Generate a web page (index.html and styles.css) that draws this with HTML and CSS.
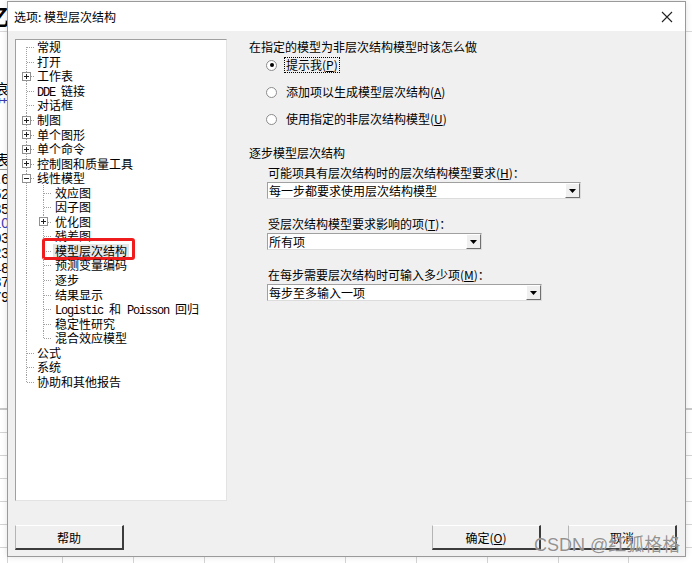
FILE: index.html
```html
<!DOCTYPE html>
<html lang="zh-CN">
<head>
<meta charset="utf-8">
<title>选项: 模型层次结构</title>
<link rel="stylesheet" href="styles.css">
</head>
<body>
<div class="sheet">
  <div class="sheet-top">
    <div class="strip">
      <div class="s-row s-big">亿</div>
      <div class="s-gap1"></div>
      <div class="s-row">哀</div>
      <div class="s-row s-blue">艹</div>
      <div class="s-gap2"></div>
      <div class="s-row s-head">表</div>
      <div class="s-row">1.6</div>
      <div class="s-row">0.52</div>
      <div class="s-row">0.35</div>
      <div class="s-row s-blue">0.10</div>
      <div class="s-row">0.03</div>
      <div class="s-row">0.23</div>
      <div class="s-row">0.48</div>
      <div class="s-row">0.37</div>
      <div class="s-row">0.79</div>
    </div>
  </div>
  <div class="sheet-grid"></div>
</div>

<div class="dialog">
  <div class="titlebar">
    <span class="title">选项: 模型层次结构</span>
    <svg class="close" width="12" height="12" viewBox="0 0 12 12"><path d="M1 1 L11 11 M11 1 L1 11" stroke="#222" stroke-width="1.1" fill="none"/></svg>
  </div>
  <div class="content">
    <div class="main">
      <div class="tree">
        <div class="row"><span class="c c1 first"></span><span class="t">常规</span></div>
        <div class="row"><span class="c c1"></span><span class="t">打开</span></div>
        <div class="row"><span class="c c1"><i class="box plus"></i></span><span class="t">工作表</span></div>
        <div class="row"><span class="c c1"></span><span class="t"><span class="lat">DDE </span>链接</span></div>
        <div class="row"><span class="c c1"></span><span class="t">对话框</span></div>
        <div class="row"><span class="c c1"><i class="box plus"></i></span><span class="t">制图</span></div>
        <div class="row"><span class="c c1"><i class="box plus"></i></span><span class="t">单个图形</span></div>
        <div class="row"><span class="c c1"><i class="box plus"></i></span><span class="t">单个命令</span></div>
        <div class="row"><span class="c c1"><i class="box plus"></i></span><span class="t">控制图和质量工具</span></div>
        <div class="row"><span class="c c1"><i class="box"></i></span><span class="t">线性模型</span></div>
        <div class="row"><span class="c c1 pipe"></span><span class="c c2"></span><span class="t">效应图</span></div>
        <div class="row"><span class="c c1 pipe"></span><span class="c c2"></span><span class="t">因子图</span></div>
        <div class="row"><span class="c c1 pipe"></span><span class="c c2"><i class="box plus"></i></span><span class="t">优化图</span></div>
        <div class="row"><span class="c c1 pipe"></span><span class="c c2"></span><span class="t">残差图</span></div>
        <div class="row selected"><span class="c c1 pipe"></span><span class="c c2"></span><span class="t">模型层次结构</span><span class="mark"></span></div>
        <div class="row"><span class="c c1 pipe"></span><span class="c c2"></span><span class="t">预测变量编码</span></div>
        <div class="row"><span class="c c1 pipe"></span><span class="c c2"></span><span class="t">逐步</span></div>
        <div class="row"><span class="c c1 pipe"></span><span class="c c2"></span><span class="t">结果显示</span></div>
        <div class="row"><span class="c c1 pipe"></span><span class="c c2"></span><span class="t"><span class="lat">Logistic </span>和<span class="lat"> Poisson </span>回归</span></div>
        <div class="row"><span class="c c1 pipe"></span><span class="c c2"></span><span class="t">稳定性研究</span></div>
        <div class="row"><span class="c c1 pipe"></span><span class="c c2 last"></span><span class="t">混合效应模型</span></div>
        <div class="row"><span class="c c1"></span><span class="t">公式</span></div>
        <div class="row"><span class="c c1"></span><span class="t">系统</span></div>
        <div class="row"><span class="c c1 last"></span><span class="t">协助和其他报告</span></div>
      </div>

      <div class="panel">
        <div class="heading">在指定的模型为非层次结构模型时该怎么做</div>
        <div class="radios">
          <div class="radio-row"><span class="radio checked"></span><span class="rlabel focus">提示我(<u>P</u>)</span></div>
          <div class="radio-row"><span class="radio"></span><span class="rlabel">添加项以生成模型层次结构(<u>A</u>)</span></div>
          <div class="radio-row"><span class="radio"></span><span class="rlabel">使用指定的非层次结构模型(<u>U</u>)</span></div>
        </div>

        <div class="heading h2">逐步模型层次结构</div>
        <div class="field f1">
          <div class="flabel">可能项具有层次结构时的层次结构模型要求(<u>H</u>)：</div>
          <div class="combo w1"><span class="val">每一步都要求使用层次结构模型</span><span class="arrow"><svg width="7" height="4" viewBox="0 0 7 4"><path d="M0 0 H7 L3.5 4 Z" fill="#000"/></svg></span></div>
        </div>
        <div class="field">
          <div class="flabel">受层次结构模型要求影响的项(<u>T</u>)：</div>
          <div class="combo w2"><span class="val">所有项</span><span class="arrow"><svg width="7" height="4" viewBox="0 0 7 4"><path d="M0 0 H7 L3.5 4 Z" fill="#000"/></svg></span></div>
        </div>
        <div class="field">
          <div class="flabel">在每步需要层次结构时可输入多少项(<u>M</u>)：</div>
          <div class="combo w3"><span class="val">每步至多输入一项</span><span class="arrow"><svg width="7" height="4" viewBox="0 0 7 4"><path d="M0 0 H7 L3.5 4 Z" fill="#000"/></svg></span></div>
        </div>
      </div>
    </div>

    <div class="buttons">
      <button class="btn">帮助</button>
      <span class="spacer"></span>
      <button class="btn">确定(<u>O</u>)</button>
      <button class="btn cancel">取消</button>
    </div>
  </div>
</div>

<div class="watermark">CSDN @红狐格格</div>
</body>
</html>
```

FILE: styles.css
```css
* { box-sizing: border-box; }

html, body {
  margin: 0;
  padding: 0;
}

body {
  position: relative;
  width: 692px;
  height: 563px;
  overflow: hidden;
  background: #ffffff;
  font-family: "Noto Sans CJK SC", "Liberation Sans", sans-serif;
  font-size: 12px;
  color: #000;
}

/* ---------- spreadsheet behind the dialog ---------- */
.sheet {
  position: absolute;
  inset: 0;
  display: flex;
  flex-direction: column;
}

.sheet-top {
  height: 377px;
  border-top: 1px solid #d8d8d8;
  margin-top: 31px;
}

.strip {
  width: 9px;
  margin-top: -31px;
  display: flex;
  flex-direction: column;
  align-items: flex-end;
  overflow: hidden;
  font-family: "Liberation Sans", "Noto Sans CJK SC", sans-serif;
  font-size: 14px;
}

.s-row {
  height: 14.7px;
  line-height: 14.7px;
  white-space: nowrap;
  flex: none;
}

.s-big {
  height: 28px;
  line-height: 28px;
  font-size: 22px;
  font-family: "Noto Sans CJK SC", sans-serif;
  font-weight: bold;
}

.s-gap1 { height: 53px; flex: none; }
.s-gap2 { height: 42px; flex: none; }
.s-blue { color: #3b3bb0; }
.s-head { border-bottom: 1px solid #999; height: 17px; margin-bottom: 2px; }

.sheet-grid {
  flex: 1;
  border-top: 2px solid #c8c8c8;
  background-image:
    repeating-linear-gradient(to bottom, transparent 0 22px, #d4d4d4 22px 23px),
    repeating-linear-gradient(to right, #d4d4d4 0 1px, transparent 1px 70.8px);
  background-position: 0 0, 62px 0;
}

/* ---------- dialog window ---------- */
.dialog {
  position: absolute;
  left: 7px;
  top: 1px;
  width: 679px;
  height: 556px;
  border: 1px solid #9a9a9a;
  background: #f0f0f0;
  display: flex;
  flex-direction: column;
  box-shadow: 0 0 6px rgba(0, 0, 0, 0.12);
}

.titlebar {
  height: 29px;
  background: #ffffff;
  display: flex;
  align-items: center;
  justify-content: space-between;
  padding: 0 12px 0 6px;
  flex: none;
}

.title {
  font-family: "Noto Sans CJK SC", sans-serif;
  font-size: 12px;
  color: #000;
}

.close { display: block; }

.content {
  flex: 1;
  display: flex;
  flex-direction: column;
  padding: 8px 7px 6px 7px;
}

.main {
  display: flex;
  align-items: flex-start;
}

/* ---------- tree ---------- */
.tree {
  width: 212px;
  height: 462px;
  flex: none;
  background: #ffffff;
  border: 1px solid;
  border-color: #a0a0a0 #e3e3e3 #e3e3e3 #a0a0a0;
}

.row {
  position: relative;
  display: flex;
  align-items: stretch;
  height: 14.55px;
  line-height: 14px;
}

.c {
  position: relative;
  flex: none;
}

.c1 { width: 19px; }
.c2 { width: 18px; }

.c::before {
  content: "";
  position: absolute;
  top: 0;
  bottom: 0;
  width: 1px;
  background: repeating-linear-gradient(to bottom, #a0a0a0 0 1px, transparent 1px 2px);
}

.c::after {
  content: "";
  position: absolute;
  top: 50%;
  height: 1px;
  right: 1px;
  background: repeating-linear-gradient(to right, #a0a0a0 0 1px, transparent 1px 2px);
}

.c1::before { left: 10px; }
.c1::after { left: 11px; }
.c2::before { left: 8px; }
.c2::after { left: 9px; }

.c.first::before { top: 50%; }
.c.last::before { bottom: 50%; }
.c.pipe::after { display: none; }

.box {
  position: absolute;
  top: 50%;
  width: 9px;
  height: 9px;
  margin-top: -4.5px;
  border: 1px solid #909090;
  background: #fff;
  z-index: 1;
}

.c1 .box { left: 6px; }
.c2 .box { left: 4px; }

.box::before {
  content: "";
  position: absolute;
  left: 1px;
  right: 1px;
  top: 3px;
  height: 1px;
  background: #202020;
}

.box.plus::after {
  content: "";
  position: absolute;
  top: 1px;
  bottom: 1px;
  left: 3px;
  width: 1px;
  background: #202020;
}

.t {
  padding: 0 2px;
  align-self: center;
  white-space: nowrap;
  height: 14px;
}

.lat {
  font-family: "Liberation Mono", monospace;
  font-size: 12px;
  letter-spacing: -1.2px;
  white-space: pre;
}

.selected .t {
  background: #e6e6e6;
}

.mark {
  position: absolute;
  left: 26px;
  top: -6px;
  width: 93px;
  height: 22px;
  border: 3px solid #ee1c1c;
  border-radius: 3px;
}

/* ---------- right panel ---------- */
.panel {
  margin-left: 22px;
  flex: 1;
  display: flex;
  flex-direction: column;
}

.heading {
  height: 16px;
  line-height: 16px;
}

.h2 { margin-top: 18px; }

.radios {
  margin-top: 2px;
  display: flex;
  flex-direction: column;
  gap: 11px;
}

.radio-row {
  height: 16px;
  display: flex;
  align-items: center;
  padding-left: 17px;
}

.radio {
  width: 11px;
  height: 11px;
  border-radius: 50%;
  border: 1px solid #8c8c8c;
  background: #fff;
  position: relative;
  flex: none;
}

.radio.checked::after {
  content: "";
  position: absolute;
  left: 2.5px;
  top: 2.5px;
  width: 4px;
  height: 4px;
  border-radius: 50%;
  background: #000;
}

.rlabel {
  margin-left: 7px;
  padding: 0 1px;
  line-height: 14px;
  border: 1px solid transparent;
}

.rlabel.focus {
  border: 1px dotted #000;
}

.field {
  margin-top: 17px;
  padding-left: 18px;
}

.field.f1 { margin-top: 4px; }

.flabel {
  padding-left: 1px;
  height: 16px;
  line-height: 16px;
}

.combo {
  margin-top: 1px;
  height: 17px;
  display: flex;
  background: #fff;
  border: 1px solid;
  border-color: #a0a0a0 #dcdcdc #dcdcdc #a0a0a0;
}

.w1 { width: 314px; }
.w2 { width: 215px; }
.w3 { width: 275px; }

.val {
  flex: 1;
  padding-left: 1px;
  line-height: 15px;
  white-space: nowrap;
}

.arrow {
  width: 15px;
  flex: none;
  background: #f0f0f0;
  border: 1px solid;
  border-color: #ffffff #707070 #707070 #ffffff;
  display: flex;
  align-items: center;
  justify-content: center;
}

.arrow svg { display: block; }

/* ---------- buttons ---------- */
.buttons {
  margin-top: 24px;
  display: flex;
  align-items: center;
}

.spacer { flex: 1; }

.btn {
  width: 109px;
  height: 25px;
  margin: 0;
  padding: 0;
  background: #f0f0f0;
  font-family: "Noto Sans CJK SC", sans-serif;
  font-size: 12px;
  color: #000;
  border-style: solid;
  border-width: 1px 2px 2px 1px;
  border-color: #ffffff #3c3c3c #3c3c3c #b4b4b4;
}

.cancel { margin-left: 27px; margin-right: 1px; }

/* ---------- watermark ---------- */
.watermark {
  position: absolute;
  left: 534px;
  top: 530px;
  font-family: "Liberation Sans", "Noto Sans CJK SC", sans-serif;
  font-size: 18px;
  color: rgba(110, 110, 110, 0.75);
  white-space: nowrap;
  text-shadow: 0 0 1px #fff;
}
```
